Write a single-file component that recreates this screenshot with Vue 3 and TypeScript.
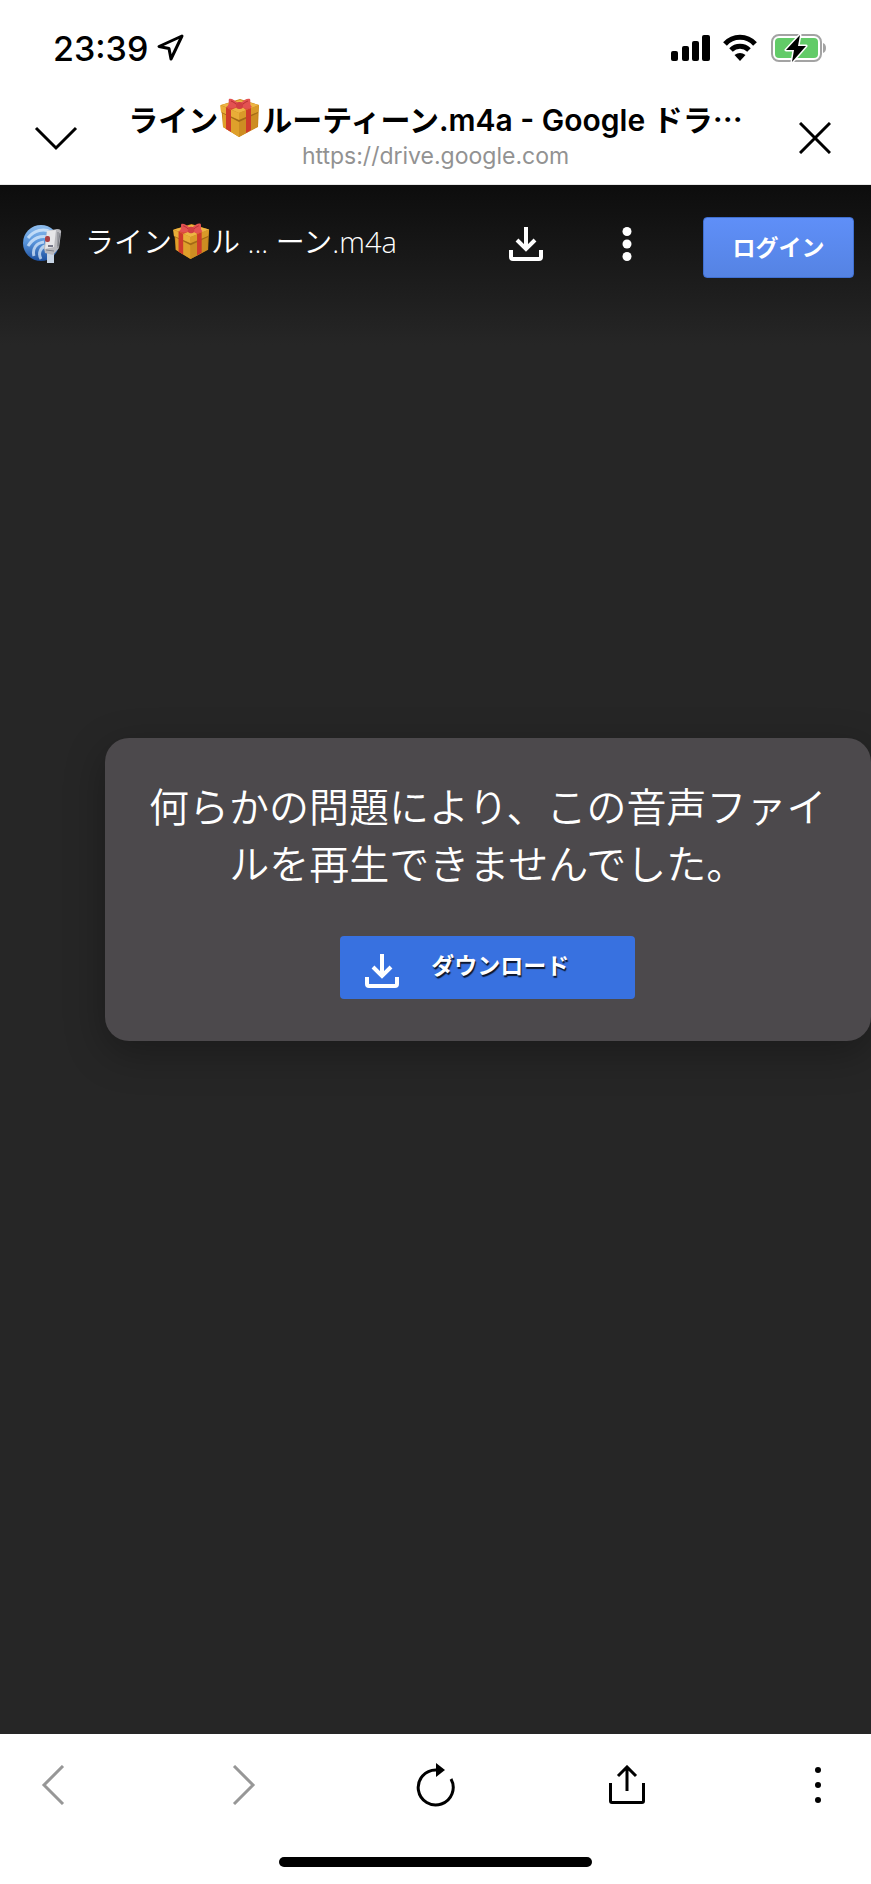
<script setup lang="ts">
const url = 'https://drive.google.com'
const message = '何らかの問題により、この音声ファイルを再生できませんでした。'
</script>

<template>
  <div class="screen">
    <svg class="sprite" aria-hidden="true">
      <defs>
        <symbol id="gift" viewBox="0 0 40 40">
          <path d="M1 7 20 1 39 7 38 29 19 39 3 29Z" fill="#c9871b" />
          <path d="M3 13 19 20V39L3 29Z" fill="#dfa02b" />
          <path d="M19 20 37 13V29L19 39Z" fill="#cd8d22" />
          <path d="M1 7 20 2 39 7 19 15Z" fill="#edb544" />
          <path d="M0 7 19 15V22L1 14Z" fill="#e9ad38" />
          <path d="M19 15 39 7 38 14 19 22Z" fill="#d99a29" />
          <path d="m1 14 18 8 19-8v1l-19 9L2 15Z" fill="#a36a17" />
          <path d="m6 9 5 3v22l-5-3ZM26 12l5-2v22l-5 3Z" fill="#cf3a2c" />
          <path d="m6 9 9-4 5 3-9 4ZM20 7l5-2 6 5-5 2Z" fill="#d94a39" />
          <path d="M19 6C15 2 11 0 9 1c-1 2 1 4-2 8 4 2 8 1 12-1Z" fill="#e35251" />
          <path d="M20 6c4-5 8-6 10-5 1 3-1 5 2 8-4 3-8 2-12-1Z" fill="#e35251" />
          <path d="M11 3c3 1 5 3 7 5M28 3c-3 1-5 3-7 5" fill="none" stroke="#b73034" />
          <rect x="16" y="4" width="7" height="7" rx="3" fill="#d13f43" />
        </symbol>
        <symbol id="download" viewBox="0 0 34 34">
          <path d="M17 0v22M8 13l9 9 9-9" fill="none" stroke="currentColor" stroke-width="4" />
          <path d="M2 23v7q0 2 2 2h26q2 0 2-2v-7" fill="none" stroke="currentColor" stroke-width="4" />
        </symbol>
      </defs>
    </svg>

    <div class="status">
      <div class="clock">
        <span>23:39</span>
        <svg width="28" height="28" viewBox="0 0 28 28" aria-hidden="true">
          <path d="M25 2 2 12.500 12 14.500 14 25Z" fill="none" stroke="#000" stroke-width="3" stroke-linejoin="round" />
        </svg>
      </div>
      <div class="indicators">
        <svg width="40" height="28" viewBox="0 0 40 28" aria-hidden="true">
          <rect x="1" y="17" width="7" height="10" rx="2" />
          <rect x="12" y="12" width="7" height="15" rx="2" />
          <rect x="22" y="7" width="7" height="20" rx="2" />
          <rect x="32" y="1" width="8" height="26" rx="2" />
        </svg>
        <svg width="34" height="28" viewBox="0 0 34 28" aria-hidden="true">
          <path d="M2 10C10 1 24 1 32 10M8 16C13 11 21 11 26 16" fill="none" stroke="#000" stroke-width="5" />
          <path d="M11.500 21Q17 17 22.500 21L17 27Z" />
        </svg>
        <svg width="57" height="30" viewBox="0 0 57 30" aria-hidden="true">
          <rect x="2" y="2" width="49" height="26" rx="7" fill="none" stroke="#a3a3a3" stroke-width="2" />
          <rect x="5" y="5" width="43" height="20" rx="4" fill="#62cb68" />
          <path d="M53 10q3 1 3 5t-3 5Z" fill="#a3a3a3" />
          <path d="M30 2 16 17h8l-2 12L36 13h-8Z" fill="#000" stroke="#fff" stroke-width="3" paint-order="stroke" stroke-linejoin="round" />
        </svg>
      </div>
    </div>

    <header class="browser">
      <button class="icon" aria-label="Minimize">
        <svg width="44" height="26" viewBox="0 0 44 26"><path d="M2 3 22 23 42 3" fill="none" stroke="#000" stroke-width="3" /></svg>
      </button>
      <div class="heading">
        <h1>ライン<svg class="gift" role="img" aria-label="gift"><use href="#gift" /></svg>ルーティーン.m4a - Google ドラ<span class="more">⋯</span></h1>
        <p>{{ url }}</p>
      </div>
      <button class="icon" aria-label="Close">
        <svg width="32" height="32" viewBox="0 0 32 32"><path d="M1 1 31 31M31 1 1 31" fill="none" stroke="#000" stroke-width="3" /></svg>
      </button>
    </header>

    <main class="viewer">
      <div class="toolbar">
        <svg class="filetype" width="40" height="40" viewBox="0 0 40 40" aria-hidden="true">
          <defs>
            <linearGradient id="disc" x1="0" y1="0" x2="0" y2="1">
              <stop offset="0" stop-color="#8fbdec" />
              <stop offset="0.450" stop-color="#5b97dd" />
              <stop offset="1" stop-color="#1c4f9e" />
            </linearGradient>
          </defs>
          <circle cx="18" cy="19" r="18" fill="url(#disc)" />
          <path d="M5 14C11 6 21 4 28 8M5 22c5-8 13-11 20-9M11 32c-2-7 2-13 10-14M18 35c-3-5-1-11 4-13" fill="none" stroke="#e3f1ff" stroke-width="3" opacity="0.700" />
          <path d="M24 28h7v11h-7Z" fill="#c8d5e5" />
          <path d="m24 7 10-2q5 0 4 4l-2 15-6 7-8-2-1-5Z" fill="#b9b9be" />
          <path d="m24 7 9-1-2 17-9 2Z" fill="#e6e6e9" />
          <path d="M35 8v16M37 9l-2 13M23 26l8 1" stroke="#7c7e86" stroke-width="1" />
          <rect x="22" y="12" width="5" height="6" rx="2" fill="#aa4045" />
          <path d="M25 22h5" stroke="#77798a" stroke-width="2" />
        </svg>
        <div class="filename">ライン<svg class="gift" role="img" aria-label="gift"><use href="#gift" /></svg>ル ... ーン.m4a</div>
        <button class="tool" aria-label="Download">
          <svg width="34" height="34"><use href="#download" /></svg>
        </button>
        <button class="tool" aria-label="More actions">
          <svg width="10" height="34" viewBox="0 0 10 34" fill="currentColor">
            <circle cx="5" cy="4.500" r="4.500" /><circle cx="5" cy="17" r="4.500" /><circle cx="5" cy="29.500" r="4.500" />
          </svg>
        </button>
        <button class="login">ログイン</button>
      </div>

      <div class="stage">
        <section class="card">
          <p>{{ message }}</p>
          <button class="download">
            <svg width="34" height="34" aria-hidden="true"><use href="#download" /></svg>
            <span>ダウンロード</span>
          </button>
        </section>
      </div>
    </main>

    <footer class="bottom">
      <nav>
        <button class="icon muted" aria-label="Back" disabled>
          <svg width="24" height="40" viewBox="0 0 24 40"><path d="M22 1 3 20 22 39" fill="none" stroke="currentColor" stroke-width="3" /></svg>
        </button>
        <button class="icon muted" aria-label="Forward" disabled>
          <svg width="24" height="40" viewBox="0 0 24 40"><path d="M2 1 21 20 2 39" fill="none" stroke="currentColor" stroke-width="3" /></svg>
        </button>
        <button class="icon" aria-label="Reload">
          <svg width="40" height="44" viewBox="0 0 40 44">
            <path d="M20 7A17.500 17.500 0 1 0 35 16" fill="none" stroke="#000" stroke-width="3" />
            <path d="M20 0 29 7 20 14Z" />
          </svg>
        </button>
        <button class="icon" aria-label="Share">
          <svg width="38" height="40" viewBox="0 0 38 40">
            <path d="M2.500 18v18q0 1.500 1.500 1.500h30q1.500 0 1.500-1.500V18M19 26V3M10 11l9-9 9 9" fill="none" stroke="#000" stroke-width="3" />
          </svg>
        </button>
        <button class="icon" aria-label="Menu">
          <svg width="8" height="40" viewBox="0 0 8 40"><circle cx="4" cy="5" r="3" /><circle cx="4" cy="20" r="3" /><circle cx="4" cy="35" r="3" /></svg>
        </button>
      </nav>
      <div class="home"></div>
    </footer>
  </div>
</template>

<style>
body {
  margin: 0;
}
</style>

<style scoped>
.screen {
  display: flex;
  flex-direction: column;
  min-height: 100vh;
  background: #fff;
  color: #000;
  font-family: Inter, "Noto Sans CJK JP", sans-serif;
}
.sprite {
  position: absolute;
  width: 0;
  height: 0;
}
svg {
  flex: none;
}
button {
  display: flex;
  align-items: center;
  justify-content: center;
  margin: 0;
  padding: 0;
  border: 0;
  background: none;
  color: inherit;
  font-family: inherit;
}
h1,
p {
  margin: 0;
}
.status {
  display: flex;
  align-items: center;
  justify-content: space-between;
  height: 96px;
  padding: 0 44px 0 53px;
}
.clock {
  display: flex;
  align-items: center;
  gap: 9px;
  font-size: 34px;
  font-weight: 500;
}
.indicators {
  display: flex;
  align-items: center;
  gap: 13px;
}
.browser {
  display: flex;
  justify-content: space-between;
  height: 88px;
  padding: 0 26px;
  border-bottom: 1px solid #e8e8e8;
}
.icon {
  width: 60px;
  height: 84px;
}
.heading {
  flex: 1;
  min-width: 0;
  text-align: center;
}
h1 {
  font-size: 30px;
  font-weight: 600;
  line-height: 44px;
  white-space: nowrap;
}
.more {
  font-family: "Noto Sans CJK JP", sans-serif;
}
.gift {
  width: 40px;
  height: 40px;
  margin: 0 2px;
  vertical-align: -7px;
}
.heading p {
  color: #929292;
  font-size: 23px;
  line-height: 28px;
}
.viewer {
  display: flex;
  flex: 1;
  flex-direction: column;
  background: linear-gradient(#0d0d0d, #262626 160px);
  color: #fff;
}
.toolbar {
  display: flex;
  align-items: center;
  height: 125px;
  padding: 0 17px 0 23px;
}
.filetype {
  margin: 0 22px 7px 0;
}
.filename {
  flex: 1;
  min-width: 0;
  margin-bottom: 12px;
  font-family: "Open Sans", "Noto Sans CJK JP", sans-serif;
  font-size: 29px;
  font-weight: 350;
  line-height: 44px;
  white-space: nowrap;
}
.filename .gift {
  width: 37px;
  height: 37px;
  margin: 0 1px;
}
.tool {
  width: 101px;
  height: 60px;
  margin-bottom: 7px;
}
.login {
  width: 151px;
  height: 61px;
  margin-left: 26px;
  padding-bottom: 4px;
  border: 1px solid #3f6fd0;
  border-radius: 4px;
  background: linear-gradient(#5f8ff8, #5583e3);
  font-size: 23px;
  font-weight: 600;
}
.stage {
  display: flex;
  flex: 1;
  align-items: center;
  padding: 0 0 265px 12%;
}
.card {
  display: flex;
  flex: 1;
  flex-direction: column;
  align-items: center;
  gap: 45px;
  padding: 39px 40px 42px;
  border-radius: 24px;
  background: #4c494c;
  box-shadow: 0 12px 40px rgba(0, 0, 0, 0.3);
}
.card p {
  font-family: "Noto Sans CJK JP", sans-serif;
  font-size: 40px;
  font-weight: 350;
  line-height: 57px;
  text-align: center;
}
.download {
  justify-content: flex-start;
  gap: 32px;
  width: 295px;
  height: 63px;
  padding-left: 25px;
  border-radius: 4px;
  background: #3871e0;
}
.download svg {
  margin-top: 7px;
}
.download span {
  padding-bottom: 8px;
  font-size: 23px;
  font-weight: 600;
  text-shadow: 1px 2px 1px rgba(0, 0, 0, 0.8);
}
.bottom {
  display: flex;
  flex-direction: column;
  align-items: center;
  justify-content: space-between;
  height: 150px;
  background: #fff;
}
nav {
  display: flex;
  justify-content: space-between;
  width: 100%;
  box-sizing: border-box;
  padding: 9px 23px 0;
}
.muted {
  color: #979797;
}
.home {
  width: 36%;
  height: 10px;
  margin-bottom: 17px;
  border-radius: 5px;
  background: #000;
}
</style>
